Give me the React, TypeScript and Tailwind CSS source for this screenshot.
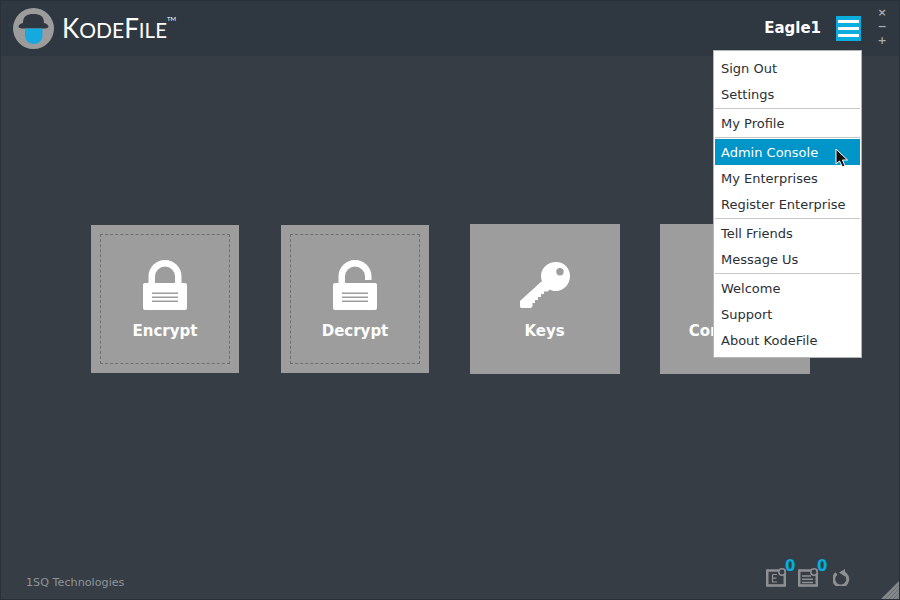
import type { ReactNode } from 'react';

const dejavu = "font-['DejaVu_Sans',sans-serif]";

function Logo() {
    return (
        <svg width="41" height="41" viewBox="0 0 41 41" className="shrink-0">
            <circle cx="20.500" cy="20.500" r="20.500" fill="#9c9c9c" />
            <path d="M10 15 C10 8 14 6 20.500 6 C27 6 31 8 31 15 C33.500 15.500 35.500 17 35.500 18.500 C35.500 20 33 20.500 31 20.500 L10 20.500 C8 20.500 5.500 20 5.500 18.500 C5.500 17 7.500 15.500 10 15 Z" fill="#2f3740" />
            <path d="M12 20.500 L29.500 20.500 L29.500 27 C29.500 32.500 26 36 20.750 36 C15.500 36 12 32.500 12 27 Z" fill="#16a9e0" />
        </svg>
    );
}

function LockIcon({ open }: { open?: boolean }) {
    return (
        <svg width="46" height="50" viewBox="0 0 46 50" className="block">
            <path
                d={open ? 'M9.750 25 V16.500 A13.250 13.250 0 0 1 36.250 16.500 V20' : 'M9.750 25 V16.500 A13.250 13.250 0 0 1 36.250 16.500 V25'}
                fill="none"
                stroke="#fff"
                strokeWidth="6.500"
            />
            <rect x="1" y="23" width="44" height="27" rx="2" fill="#fff" />
            <g fill="#9d9d9d">
                <rect x="10" y="32.500" width="26" height="1.500" />
                <rect x="10" y="36.500" width="26" height="1.500" />
                <rect x="10" y="40.500" width="26" height="1.500" />
            </g>
        </svg>
    );
}

function KeyIcon() {
    return (
        <svg width="50" height="46" viewBox="0 0 50 46" className="block">
            <path
                fillRule="evenodd"
                fill="#fff"
                d="M36 0 C44 0 50 6 50 14 C50 22 44 29 36 29 C33.500 29 31.500 28.500 30 27.500 L27.500 29.500 L24 29.500 L24 32 L21 32 L21 35 L18 35 L18 38 L15 38 L15 41 L12.500 41 L12.500 44 L11 46 L1 46 L0 45 L0 39 L22 19 C21.500 17.500 21 16 21 14 C21 6 28 0 36 0 Z M40 6 A3.700 3.700 0 1 0 40 13.400 A3.700 3.700 0 1 0 40 6 Z"
            />
        </svg>
    );
}

function Tile({ label, icon, dashed, wide }: { label: string; icon?: ReactNode; dashed?: boolean; wide?: boolean }) {
    return (
        <div className={`${wide ? 'w-[150px] h-[150px]' : 'w-[148px] h-[148px]'} shrink-0 bg-[#9d9d9d] ${dashed ? 'p-[9px]' : ''}`}>
            <div className={`h-full flex flex-col items-center ${dashed ? 'pt-[25px] border border-dashed border-[#6f6f6f]' : 'pt-[38px]'}`}>
                <div className="h-[50px]">{icon}</div>
                <div className={`${dejavu} ${dashed ? 'mt-[11px] pl-px' : 'mt-[9px]'} text-[15px] leading-[20px] font-bold text-white whitespace-nowrap`}>{label}</div>
            </div>
        </div>
    );
}

function MenuItem({ label, active }: { label: string; active?: boolean }) {
    return (
        <div className={`h-[26px] pl-[6px] text-[13px] leading-[28px] ${active ? 'bg-[#0095c8] text-white' : 'text-[#2b2f36]'}`}>{label}</div>
    );
}

function Separator() {
    return <div className="h-px my-px bg-[#c8c8c8]" />;
}

function TrayIcon({ letter }: { letter?: boolean }) {
    return (
        <svg width="20" height="19" viewBox="0 0 20 19" className="block mt-[3px] -mr-px">
            <rect x="1.250" y="2.500" width="17.500" height="15" fill="none" stroke="#8f9092" strokeWidth="2.500" />
            {letter ? (
                <path d="M6.500 6.500 H11 M6.500 6.500 V14 H11 M6.500 10.200 H10.500" fill="none" stroke="#8f9092" strokeWidth="1.200" />
            ) : (
                <path d="M4 8 H13 M4 11.200 H15 M4 14.400 H15" fill="none" stroke="#8f9092" strokeWidth="1.500" />
            )}
            <circle cx="16" cy="4" r="3.200" fill="#363d45" stroke="#8f9092" strokeWidth="1.500" />
        </svg>
    );
}

export default function App() {
    return (
        <div className={`relative w-[900px] h-[600px] overflow-hidden flex flex-col bg-[#363d45] border border-[#2a3037] ${dejavu}`}>
            {/* Header */}
            <header className="h-[55px] shrink-0 bg-[#2f3740] flex items-center pl-[12px] pb-[1px]">
                <Logo />
                <div className="ml-[8px] -mt-[1px] flex items-baseline font-['Lato',sans-serif] text-white leading-none">
                    <span className="text-[26px]">K</span>
                    <span className="text-[21px]">ODE</span>
                    <span className="text-[26px]">F</span>
                    <span className="text-[20.500px]">ILE</span>
                    <span className="text-[6px] self-start mt-[1px]">TM</span>
                </div>
                <div className="ml-auto text-[15px] font-bold text-white">Eagle1</div>
                <div className="ml-[15px] w-[25px] h-[25px] bg-[#0aaedc] flex flex-col justify-center gap-[4px] px-[2px]">
                    <div className="h-[3px] bg-white" />
                    <div className="h-[3px] bg-white" />
                    <div className="h-[3px] bg-white" />
                </div>
                <div className="ml-[16px] mr-[12px] w-[10px] flex flex-col items-center self-start pt-[5px] text-[#a9abad] text-[11px] leading-[14px] font-bold">
                    <span>×</span>
                    <span>−</span>
                    <span>+</span>
                </div>
            </header>

            {/* Tiles */}
            <main className="flex-1 pt-[168px] flex justify-center items-start">
                <div className="flex items-center">
                    <Tile label="Encrypt" dashed icon={<LockIcon />} />
                    <div className="w-[42px]" />
                    <Tile label="Decrypt" dashed icon={<LockIcon open />} />
                    <div className="w-[41px]" />
                    <Tile label="Keys" wide icon={<KeyIcon />} />
                    <div className="w-[40px]" />
                    <Tile label="Contact Us" wide />
                </div>
            </main>

            {/* Footer */}
            <footer className="h-[34px] shrink-0 flex items-start pl-[25px]">
                <span className="mt-[10px] text-[11.2px] leading-[16px] text-[#8f9499]">1SQ Technologies</span>
                <div className="ml-auto mr-[48px] flex items-start">
                    <TrayIcon letter />
                    <span className="-mt-[7px] text-[15px] leading-[16px] font-bold text-[#00aee0] w-[13px]">0</span>
                    <TrayIcon />
                    <span className="-mt-[7px] text-[15px] leading-[16px] font-bold text-[#00aee0] w-[16px]">0</span>
                    <svg width="18" height="17" viewBox="0 0 18 17" className="block mt-[4px]">
                        <path d="M3.500 4.500 A7 7 0 1 0 10 3.500" fill="none" stroke="#8f9092" strokeWidth="3" />
                        <path d="M6 3.500 L12 0 L12 7.500 Z" fill="#8f9092" />
                    </svg>
                </div>
            </footer>

            {/* Dropdown menu */}
            <div className="absolute left-[712px] top-[49px] w-[149px] h-[308px] bg-white border border-[#b5b5b5] p-px pt-[4px]">
                <MenuItem label="Sign Out" />
                <MenuItem label="Settings" />
                <Separator />
                <MenuItem label="My Profile" />
                <Separator />
                <MenuItem label="Admin Console" active />
                <MenuItem label="My Enterprises" />
                <MenuItem label="Register Enterprise" />
                <Separator />
                <MenuItem label="Tell Friends" />
                <MenuItem label="Message Us" />
                <Separator />
                <MenuItem label="Welcome" />
                <MenuItem label="Support" />
                <MenuItem label="About KodeFile" />
            </div>

            {/* Mouse cursor */}
            <svg width="14" height="20" viewBox="0 0 14 20" className="absolute left-[834px] top-[147px]">
                <path d="M1 1 L1 16 L4.500 13 L7.500 19 L10 18 L7.500 12 L12.500 12 Z" fill="#111" stroke="#fff" strokeWidth="1" />
            </svg>

            {/* Resize grip */}
            <svg width="18" height="18" viewBox="0 0 18 18" className="absolute right-0 bottom-0">
                <path d="M18 0 L18 18 L0 18 Z" fill="#85888b" />
                <path d="M18 4 L4 18 M18 8 L8 18 M18 12 L12 18 M18 16 L16 18" stroke="#6a6e73" strokeWidth="1" />
            </svg>
        </div>
    );
}
